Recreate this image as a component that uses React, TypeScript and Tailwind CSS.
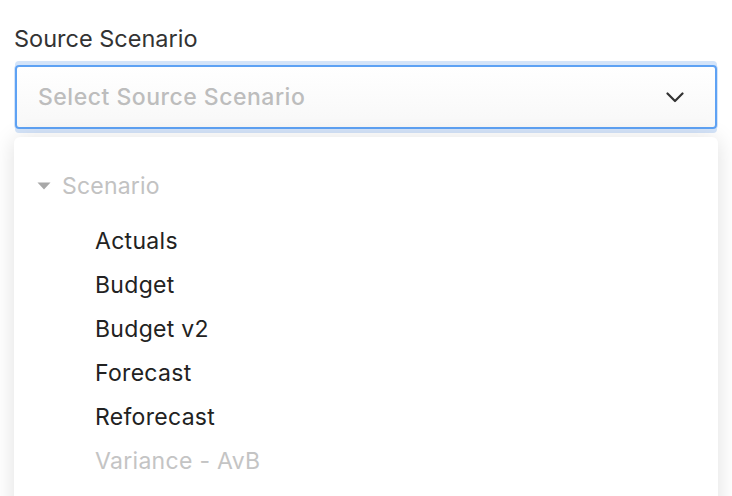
import React from 'react';

const items = [
  { label: 'Actuals', disabled: false },
  { label: 'Budget', disabled: false },
  { label: 'Budget v2', disabled: false },
  { label: 'Forecast', disabled: false },
  { label: 'Reforecast', disabled: false },
  { label: 'Variance - AvB', disabled: true },
];

export default function App() {
  return (
    <div
      className="w-full h-[496px] overflow-hidden bg-white px-[14px] pt-[25px]"
      style={{ fontFamily: 'Inter, "Noto Sans", sans-serif' }}
    >
      {/* Label */}
      <div className="text-[23.5px] leading-[28px] text-[#333333]">Source Scenario</div>

      {/* Select trigger */}
      <div className="mt-[12px] mx-[1px] h-[64px] rounded-[4px] border-2 border-[#5ea2f4] bg-gradient-to-b from-white to-[#f8f8f8] shadow-[0_0_0_1px_#d4e4f9,0_-4px_0_0_#d4e4f9,0_4px_0_0_#d4e4f9] flex items-center justify-between pl-[21px] pr-[31px]">
        <span className="text-[23px] tracking-[0.5px] font-medium text-[#bdbdbd]">Select Source Scenario</span>
        <svg width="18" height="11" viewBox="0 0 18 11" fill="none">
          <path d="M1.5 1.5 L9 9 L16.5 1.5" stroke="#333" strokeWidth="2.2" strokeLinecap="round" strokeLinejoin="round" />
        </svg>
      </div>

      {/* Dropdown menu */}
      <div className="mt-[8px] rounded-[6px] bg-white shadow-[0_2px_22px_rgba(0,0,0,0.13)] pt-[27px] pb-[40px]">
        <div className="flex items-center h-[44px] pl-[23px]">
          <svg width="14" height="8" viewBox="0 0 14 8" className="mr-[11px]">
            <path d="M0.5 0.5 L13.5 0.5 L7 7.5 Z" fill="#a8a8a8" />
          </svg>
          <span className="text-[23px] tracking-[0.2px] text-[#c2c2c2]">Scenario</span>
        </div>
        <div className="mt-[11px]">
          {items.map((it) => (
            <div
              key={it.label}
              className={`h-[44px] flex items-center pl-[81px] text-[23px] tracking-[0.3px] ${
                it.disabled ? 'text-[#c4c4c4]' : 'text-[#222222]'
              }`}
            >
              {it.label}
            </div>
          ))}
        </div>
      </div>
    </div>
  );
}
